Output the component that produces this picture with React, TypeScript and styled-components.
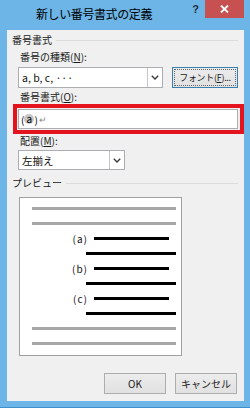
import React from 'react';
import styled, { createGlobalStyle } from 'styled-components';

const GlobalStyle = createGlobalStyle`
  html, body {
    margin: 0;
    padding: 0;
    background: #6db5e6;
  }
  body {
    font-family: "Noto Sans CJK JP", "Noto Sans", sans-serif;
    color: #000;
  }
`;

const Window = styled.div`
  width: 250px;
  height: 408px;
  box-sizing: border-box;
  background: #6db5e6;
  border-bottom: 1px solid #3f8fcc;
  padding: 0 6px 6px 7px;
  display: flex;
  flex-direction: column;
`;

const TitleBar = styled.div`
  height: 30px;
  display: flex;
  align-items: flex-start;
  flex-shrink: 0;
`;

const Title = styled.div`
  flex: 1;
  text-align: center;
  padding: 6px 6px 0 0;
  font-size: 12px;
  line-height: 16px;
  letter-spacing: -0.4px;
`;

const HelpButton = styled.div`
  width: 17px;
  height: 18px;
  margin-right: 1px;
  display: flex;
  align-items: center;
  justify-content: center;
  font-family: "Liberation Sans", sans-serif;
  font-weight: bold;
  font-size: 11px;
  color: #1e2c3c;
`;

const CloseButton = styled.div`
  width: 39px;
  height: 18px;
  background: #c75050;
  display: flex;
  align-items: center;
  justify-content: center;
`;

const Content = styled.div`
  flex: 1;
  background: #f0f0f0;
  padding-top: 3px;
  display: flex;
  flex-direction: column;
  font-size: 10px;
`;

const GroupHeader = styled.div<{ $gap?: number }>`
  height: 14px;
  margin-top: ${(p) => p.$gap ?? 0}px;
  padding: 0 6px 0 5px;
  display: flex;
  align-items: center;
  gap: 4px;
  font-size: 10px;
  line-height: 14px;
  color: #1a1a1a;
  &::after {
    content: '';
    flex: 1;
    height: 1px;
    background: #dcdcdc;
  }
`;

const Section = styled.div`
  padding: 0 6px 0 11px;
  display: flex;
  flex-direction: column;
`;

const Label = styled.div<{ $gap?: number }>`
  height: 14px;
  line-height: 14px;
  margin-top: ${(p) => p.$gap ?? 0}px;
  padding-left: 2px;
  font-size: 10px;
  color: #1a1a1a;
  u {
    text-decoration: underline;
  }
`;

const FieldRow = styled.div<{ $gap?: number }>`
  margin-top: ${(p) => p.$gap ?? 3}px;
  display: flex;
  gap: 9px;
`;

const Combo = styled.div<{ $width: number; $height: number }>`
  width: ${(p) => p.$width}px;
  height: ${(p) => p.$height}px;
  flex-shrink: 0;
  box-sizing: border-box;
  background: #fff;
  border: 1px solid #abadb3;
  display: flex;
  align-items: stretch;
`;

const ComboText = styled.div`
  flex: 1;
  padding-left: 3px;
  display: flex;
  align-items: center;
  font-size: 10.5px;
  color: #111;
`;

const ComboArrow = styled.div`
  width: 14px;
  border-left: 1px solid #c6c6c6;
  display: flex;
  align-items: center;
  justify-content: center;
`;

const Button = styled.div<{ $focused?: boolean }>`
  width: ${(p) => (p.$focused ? 66 : 62)}px;
  height: 21px;
  flex-shrink: 0;
  box-sizing: border-box;
  background: linear-gradient(#ececec, #e1e1e1);
  border: 1px solid ${(p) => (p.$focused ? '#3c7fb1' : '#adadad')};
  display: flex;
  align-items: center;
  justify-content: center;
  white-space: nowrap;
  font-size: ${(p) => (p.$focused ? 9 : 10)}px;
  letter-spacing: ${(p) => (p.$focused ? -0.3 : 0)}px;
  color: #1a1a1a;
  ${(p) => (p.$focused ? 'outline: 1px dotted #666; outline-offset: -3px;' : '')}
`;

const Highlight = styled.div`
  margin: 0 -6px 0 -5px;
  height: 30px;
  box-sizing: border-box;
  border: 4px solid #e3141d;
  padding: 1px 2px 1px 1px;
  display: flex;
`;

const TextBox = styled.div`
  flex: 1;
  box-sizing: border-box;
  background: #fff;
  border: 1px solid #abadb3;
  display: flex;
  align-items: center;
  padding-left: 2px;
  font-size: 10px;
`;

const FieldCode = styled.span`
  display: inline-flex;
  align-items: center;
  justify-content: center;
  width: 10px;
  height: 10px;
  border-radius: 50%;
  background: #c4c4c4;
  line-height: 1;
`;

const ParaMark = styled.span`
  color: #8a8a8a;
  font-size: 9px;
  margin-left: 1px;
`;

const Preview = styled.div`
  margin: 7px 0 0 12px;
  width: 163px;
  height: 159px;
  box-sizing: border-box;
  background: #fff;
  border: 1px solid #a0a0a0;
  padding: 3px 5px 0 12px;
  display: flex;
  flex-direction: column;
`;

const PreviewRow = styled.div`
  height: 15px;
  display: flex;
  align-items: center;
`;

const Bar = styled.div<{ $dark?: boolean; $indent?: number; $inset?: number }>`
  flex: 1;
  height: 3px;
  background: ${(p) => (p.$dark ? '#000' : '#a6a6a6')};
  margin-left: ${(p) => p.$indent ?? 0}px;
  margin-right: ${(p) => p.$inset ?? 0}px;
`;

const Marker = styled.span`
  width: 56px;
  text-align: right;
  font-size: 10px;
  letter-spacing: 1px;
  line-height: 12px;
  color: #111;
`;

const Footer = styled.div`
  margin-top: 17px;
  padding-right: 7px;
  display: flex;
  justify-content: flex-end;
  gap: 9px;
`;

const Chevron = () => (
  <svg width="8" height="5" viewBox="0 0 8 5">
    <polyline points="0.8,0.8 4,4 7.2,0.8" fill="none" stroke="#333" strokeWidth="1.3" />
  </svg>
);

const CloseIcon = () => (
  <svg width="9" height="8" viewBox="0 0 9 8">
    <path d="M1 0.5 L8 7.5 M8 0.5 L1 7.5" stroke="#fff" strokeWidth="1.8" />
  </svg>
);

const items = ['a', 'b', 'c'];

const App = () => {
  return (
    <Window>
      <GlobalStyle />
      <TitleBar>
        <Title>新しい番号書式の定義</Title>
        <HelpButton>?</HelpButton>
        <CloseButton>
          <CloseIcon />
        </CloseButton>
      </TitleBar>
      <Content>
        <GroupHeader>番号書式</GroupHeader>
        <Section>
          <Label $gap={3}>
            番号の種類(<u>N</u>):
          </Label>
          <FieldRow>
            <Combo $width={145} $height={21}>
              <ComboText>a, b, c, ···</ComboText>
              <ComboArrow>
                <Chevron />
              </ComboArrow>
            </Combo>
            <Button $focused>
              フォント(<u>F</u>)...
            </Button>
          </FieldRow>
          <Label $gap={2}>
            番号書式(<u>O</u>):
          </Label>
          <Highlight>
            <TextBox>
              (<FieldCode>a</FieldCode>)<ParaMark>↵</ParaMark>
            </TextBox>
          </Highlight>
          <Label>
            配置(<u>M</u>):
          </Label>
          <FieldRow $gap={2}>
            <Combo $width={107} $height={20}>
              <ComboText>左揃え</ComboText>
              <ComboArrow>
                <Chevron />
              </ComboArrow>
            </Combo>
          </FieldRow>
        </Section>
        <GroupHeader $gap={6}>プレビュー</GroupHeader>
        <Preview>
          <PreviewRow>
            <Bar />
          </PreviewRow>
          <PreviewRow>
            <Bar />
          </PreviewRow>
          {items.map((it) => (
            <React.Fragment key={it}>
              <PreviewRow>
                <Marker>({it})</Marker>
                <Bar $dark $indent={6} $inset={7} />
              </PreviewRow>
              <PreviewRow>
                <Bar $dark $indent={54} />
              </PreviewRow>
            </React.Fragment>
          ))}
          <PreviewRow>
            <Bar />
          </PreviewRow>
          <PreviewRow>
            <Bar />
          </PreviewRow>
        </Preview>
        <Footer>
          <Button>OK</Button>
          <Button>キャンセル</Button>
        </Footer>
      </Content>
    </Window>
  );
};

export default App;
